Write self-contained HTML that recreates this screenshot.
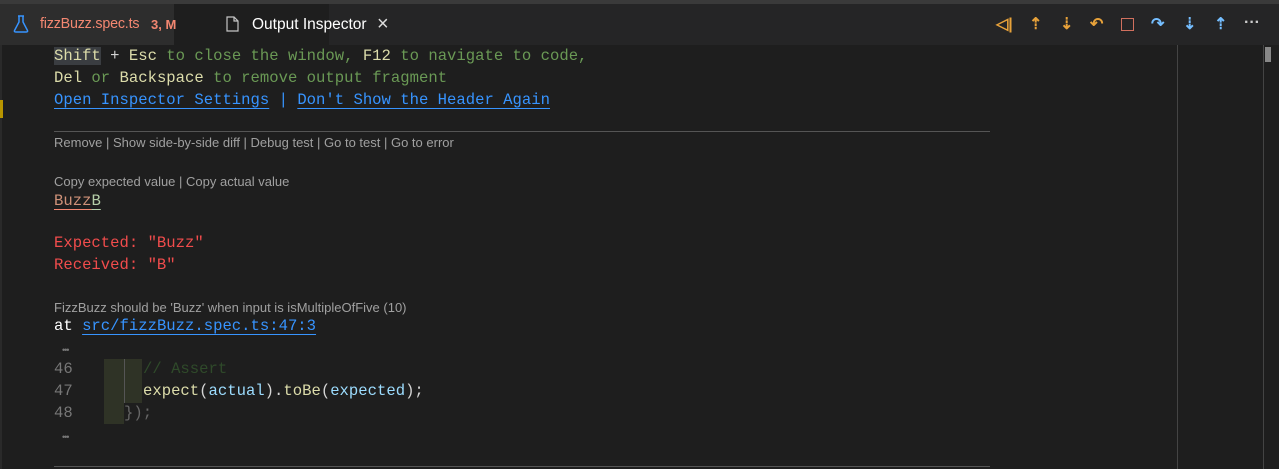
<!DOCTYPE html>
<html><head><style>
body{margin:0;width:1279px;height:469px;background:#1e1e1e;overflow:hidden;position:relative;font-family:"Liberation Sans",sans-serif}
.top{position:absolute;left:0;top:0;width:1279px;height:4px;background:#3a3a3a}
.tabs{position:absolute;left:0;top:4px;width:1279px;height:41px;background:#252526}
.tab{position:absolute;top:4px;height:41px;line-height:41px;font-size:16px}
.m{font-family:"Liberation Mono",monospace;font-size:15.6px;position:absolute;white-space:pre;color:#d4d4d4}
.g{color:#6a9955}.k{color:#dcdcaa}.l{color:#3794ff;text-decoration:underline;text-underline-offset:4px}
.s{position:absolute;font-size:13px;color:#a0a0a0;white-space:pre}
.r{color:#f14c4c}
.ic{position:absolute;top:14px;font-size:16px;font-weight:bold}
.dots{position:absolute;color:#777;font-size:9px;letter-spacing:-1px}
</style></head><body>
<div class="top"></div>
<div class="tabs"></div>
<div class="tab" style="left:0;width:174px;background:#2d2d2d"></div>
<div class="tab" style="left:174px;width:155px;background:#1e1e1e"></div>
<svg style="position:absolute;left:13px;top:15px" width="16" height="18" viewBox="0 0 16 18"><path d="M5 1h6M6 1v6L1.5 15.5Q1 17 3 17h10q2 0 1.5-1.5L10 7V1" fill="none" stroke="#3794ff" stroke-width="1.5"/></svg>
<div class="tab" style="left:40px;color:#f48771;font-size:14.3px;letter-spacing:-0.2px">fizzBuzz.spec.ts</div>
<div class="tab" style="left:151px;color:#f48771;font-size:13px;font-weight:bold">3, M</div>
<svg style="position:absolute;left:226px;top:16px" width="13" height="16" viewBox="0 0 13 16"><path d="M1 1h7l4 4v10H1z M8 1v4h4" fill="none" stroke="#c5c5c5" stroke-width="1.2"/></svg>
<div class="tab" style="left:252px;color:#fff;font-size:15.5px">Output Inspector</div>
<div class="tab" style="left:377px;color:#ddd;font-size:20px">×</div>
<div class="ic" style="left:996px;color:#e8a23a">◁|</div>
<div class="ic" style="left:1029px;color:#e8a23a">⇡</div>
<div class="ic" style="left:1060px;color:#e8a23a">⇣</div>
<div class="ic" style="left:1090px;color:#e8a23a">↶</div>
<div style="position:absolute;left:1121px;top:18px;width:11px;height:11px;border:1.5px solid #d1705e"></div>
<div class="ic" style="left:1151px;color:#75beff">↷</div>
<div class="ic" style="left:1183px;color:#75beff">⇣</div>
<div class="ic" style="left:1214px;color:#75beff">⇡</div>
<div class="ic" style="left:1244px;color:#ccc">···</div>
<div style="position:absolute;left:1177px;top:45px;width:1px;height:424px;background:#444"></div>
<div style="position:absolute;left:1263px;top:45px;width:1px;height:424px;background:#444"></div>
<div style="position:absolute;left:1265px;top:47px;width:6px;height:15px;background:#888"></div>
<div style="position:absolute;left:0;top:45px;width:2px;height:424px;background:#2a2a2a"></div>
<div style="position:absolute;left:0;top:100px;width:3px;height:18px;background:#b89500"></div>
<div class="m" style="left:54px;top:47px"><span class="k" style="background:#3a3d41">Shift</span> + <span class="k">Esc</span><span class="g"> to close the window, </span><span class="k">F12</span><span class="g"> to navigate to code,</span></div>
<div class="m" style="left:54px;top:69px"><span class="k">Del</span><span class="g"> or </span><span class="k">Backspace</span><span class="g"> to remove output fragment</span></div>
<div class="m" style="left:54px;top:91px"><span class="l">Open Inspector Settings</span><span style="color:#3794ff"> | </span><span class="l">Don't Show the Header Again</span></div>
<div style="position:absolute;left:54px;top:131px;width:936px;height:1px;background:#555"></div>
<div class="s" style="left:54px;top:135px">Remove | Show side-by-side diff | Debug test | Go to test | Go to error</div>
<div class="s" style="left:54px;top:174px">Copy expected value | Copy actual value</div>
<div class="m" style="left:54px;top:192px;color:#ce9178"><span style="text-decoration:underline;text-decoration-color:#f48771;text-underline-offset:4px">Buzz</span><span style="color:#b5cea8;text-decoration:underline;text-underline-offset:4px">B</span></div>
<div class="m r" style="left:54px;top:234px">Expected: "Buzz"</div>
<div class="m r" style="left:54px;top:256px">Received: "B"</div>
<div class="s" style="left:54px;top:300px">FizzBuzz should be 'Buzz' when input is isMultipleOfFive (10)</div>
<div class="m" style="left:54px;top:317px;color:#fff">at <span class="l">src/fizzBuzz.spec.ts:47:3</span></div>
<div class="dots" style="left:62px;top:345px">•••</div>
<div style="position:absolute;left:104px;top:359px;width:38px;height:22px;background:#2f3326"></div>
<div style="position:absolute;left:104px;top:381px;width:38px;height:22px;background:#2f3326"></div>
<div style="position:absolute;left:104px;top:403px;width:20px;height:21px;background:#2f3326"></div>
<div style="position:absolute;left:124px;top:359px;width:1px;height:44px;background:#555"></div>
<div class="m" style="left:54px;top:360px;color:#777">46</div>
<div class="m" style="left:54px;top:382px;color:#777">47</div>
<div class="m" style="left:54px;top:404px;color:#777">48</div>
<div class="m" style="left:143px;top:360px;color:#2f4a2a">// Assert</div>
<div class="m" style="left:143px;top:382px"><span class="k">expect</span>(<span style="color:#9cdcfe">actual</span>).<span class="k">toBe</span>(<span style="color:#9cdcfe">expected</span>);</div>
<div class="m" style="left:124px;top:404px;color:#666">});</div>
<div class="dots" style="left:62px;top:432px">•••</div>
<div style="position:absolute;left:54px;top:466px;width:936px;height:1px;background:#555"></div>
</body></html>
